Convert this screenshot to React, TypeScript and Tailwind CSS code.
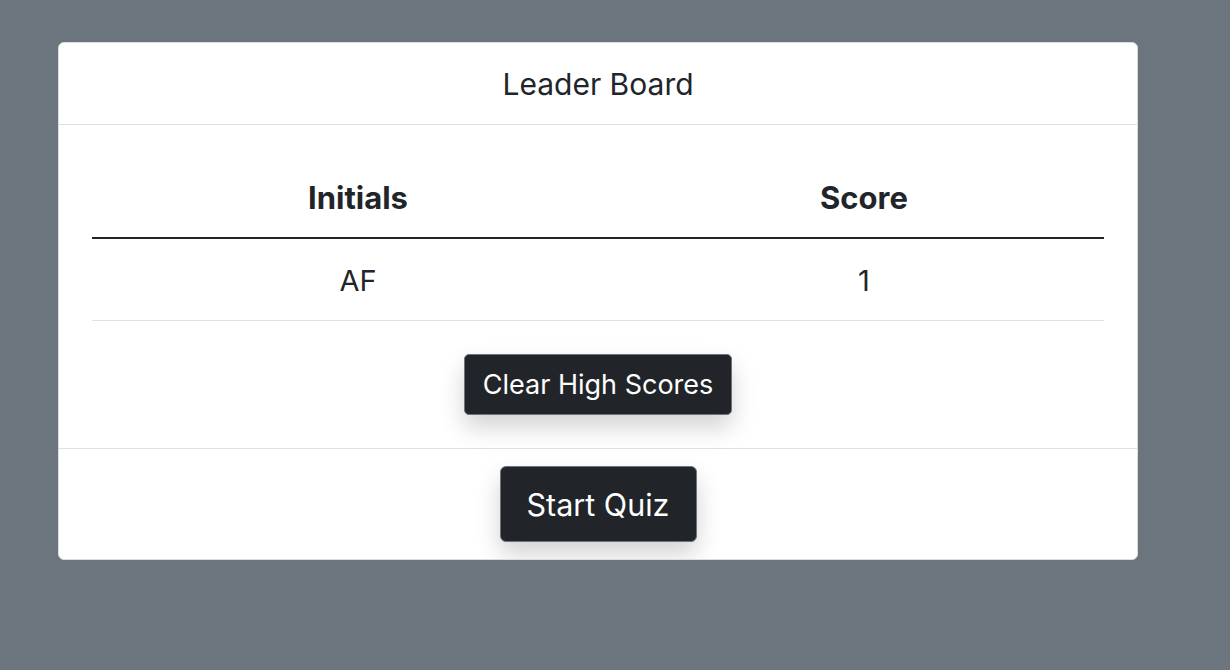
export default function App() {
  return (
    <div className="min-h-[670px] w-full bg-[#6c757d] pt-[42px] pl-[58px]" style={{ fontFamily: 'Inter, "Noto Sans", sans-serif' }}>
      <div className="w-[1080px] overflow-hidden rounded-[6px] border border-[#dcdcdc] bg-white text-[#212529]">
        <div className="flex h-[82px] items-center justify-center border-b border-[#dee2e6] pt-[2px] text-[30px]">
          Leader Board
        </div>
        <div className="px-[33px] pt-[33px] pb-[33px]">
          <div className="grid grid-cols-[532px_480px]">
            <div className="flex h-[81px] items-center justify-center border-b-2 border-[#212529] pt-[2px] text-[31px] font-bold">Initials</div>
            <div className="flex h-[81px] items-center justify-center border-b-2 border-[#212529] pt-[2px] text-[31px] font-bold">Score</div>
            <div className="flex h-[82px] items-center justify-center border-b border-[#dee2e6] pt-[2px] text-[29px]">AF</div>
            <div className="flex h-[82px] items-center justify-center border-b border-[#dee2e6] pt-[2px] text-[29px]">1</div>
          </div>
          <div className="mt-[33px] flex justify-center">
            <button className="flex h-[61px] w-[268px] items-center justify-center rounded-[5px] border border-[#6c757d] bg-[#212529] pt-[2px] text-[27px] text-white shadow-[0_12px_24px_rgba(0,0,0,0.18)]">
              Clear High Scores
            </button>
          </div>
        </div>
        <div className="flex justify-center border-t border-[#dee2e6] pt-[17px] pb-[17px]">
          <button className="flex h-[76px] w-[197px] items-center justify-center rounded-[6px] border border-[#6c757d] bg-[#212529] pt-[2px] text-[30.5px] text-white shadow-[0_12px_24px_rgba(0,0,0,0.18)]">
            Start Quiz
          </button>
        </div>
      </div>
    </div>
  );
}
